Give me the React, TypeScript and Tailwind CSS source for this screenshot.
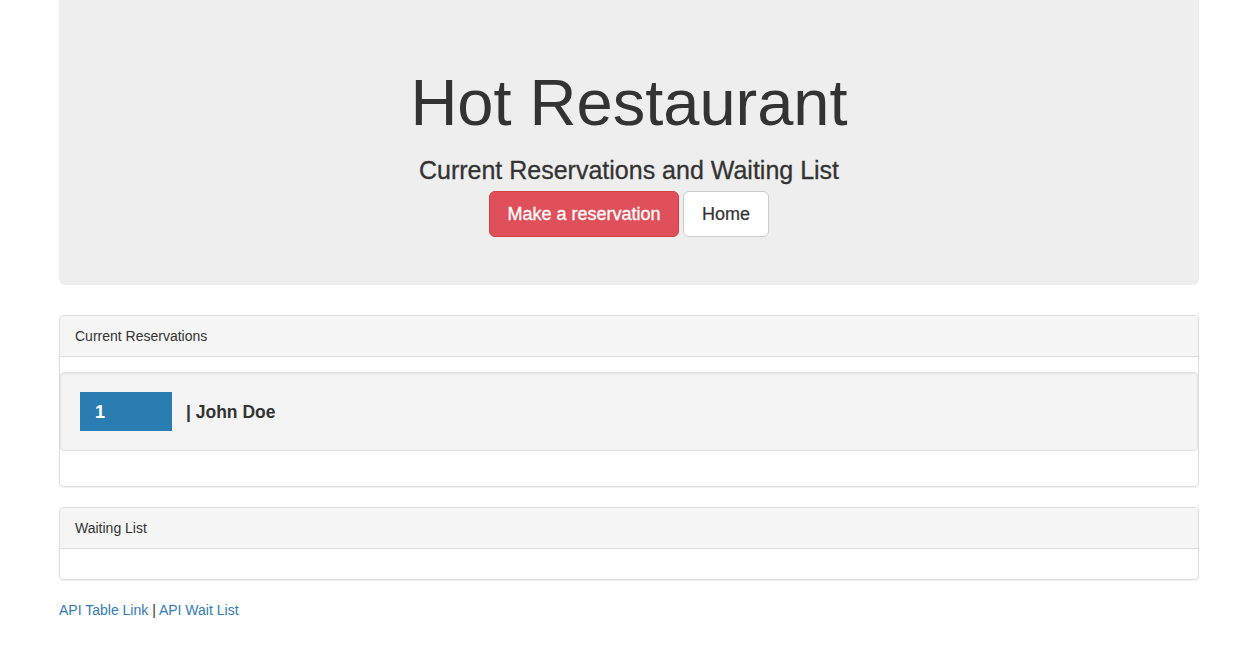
export default function App() {
  return (
    <div className="min-h-[666px] bg-white text-[#333] text-[14px] leading-[20px] font-['Liberation_Sans',Arial,sans-serif]">
      <div className="mx-auto w-[1140px]">
        <div className="rounded-b-[6px] bg-[#eee] pt-[48px] pb-[48px] text-center">
          <h1 className="mt-[20px] mb-[10px] text-[65px] leading-[69px] font-normal">Hot Restaurant</h1>
          <h3 className="mt-[20px] mb-[8px] text-[25px] leading-[26px] font-normal [-webkit-text-stroke:0.3px_#333]">
            Current Reservations and Waiting List
          </h3>
          <div className="flex justify-center gap-[4px]">
            <button className="h-[46px] rounded-[6px] border border-[#d43f3a] bg-[#e0505a] px-[17.5px] text-[18px] leading-[24px] text-white [-webkit-text-stroke:0.3px_#fff]">
              Make a reservation
            </button>
            <button className="h-[46px] rounded-[6px] border border-[#ccc] bg-white px-[18px] text-[18px] leading-[24px] text-[#333] [-webkit-text-stroke:0.2px_#333]">
              Home
            </button>
          </div>
        </div>

        <div className="mt-[30px] rounded-[4px] border border-[#ddd] shadow-[0_1px_1px_rgba(0,0,0,0.05)]">
          <div className="rounded-t-[3px] border-b border-[#ddd] bg-[#f5f5f5] px-[15px] py-[10px]">Current Reservations</div>
          <div className="pt-[15px] pb-[15px]">
            <div className="mb-[20px] rounded-[4px] border border-[#e3e3e3] bg-[#f4f4f4] p-[19px] shadow-[inset_0_1px_1px_rgba(0,0,0,0.05)]">
              <div className="flex items-center">
                <div className="flex h-[39px] w-[92px] items-center bg-[#2a7db0] pl-[15px] text-[18px] font-bold text-white">1</div>
                <span className="ml-[14px] text-[17.5px] font-bold text-[#333]">| John Doe</span>
              </div>
            </div>
          </div>
        </div>

        <div className="mt-[20px] rounded-[4px] border border-[#ddd] shadow-[0_1px_1px_rgba(0,0,0,0.05)]">
          <div className="rounded-t-[3px] border-b border-[#ddd] bg-[#f5f5f5] px-[15px] py-[10px]">Waiting List</div>
          <div className="h-[30px]" />
        </div>

        <div className="mt-[20px]">
          <a href="#" className="text-[#337ab7]">API Table Link</a>
          <span> | </span>
          <a href="#" className="text-[#337ab7]">API Wait List</a>
        </div>
      </div>
    </div>
  );
}
